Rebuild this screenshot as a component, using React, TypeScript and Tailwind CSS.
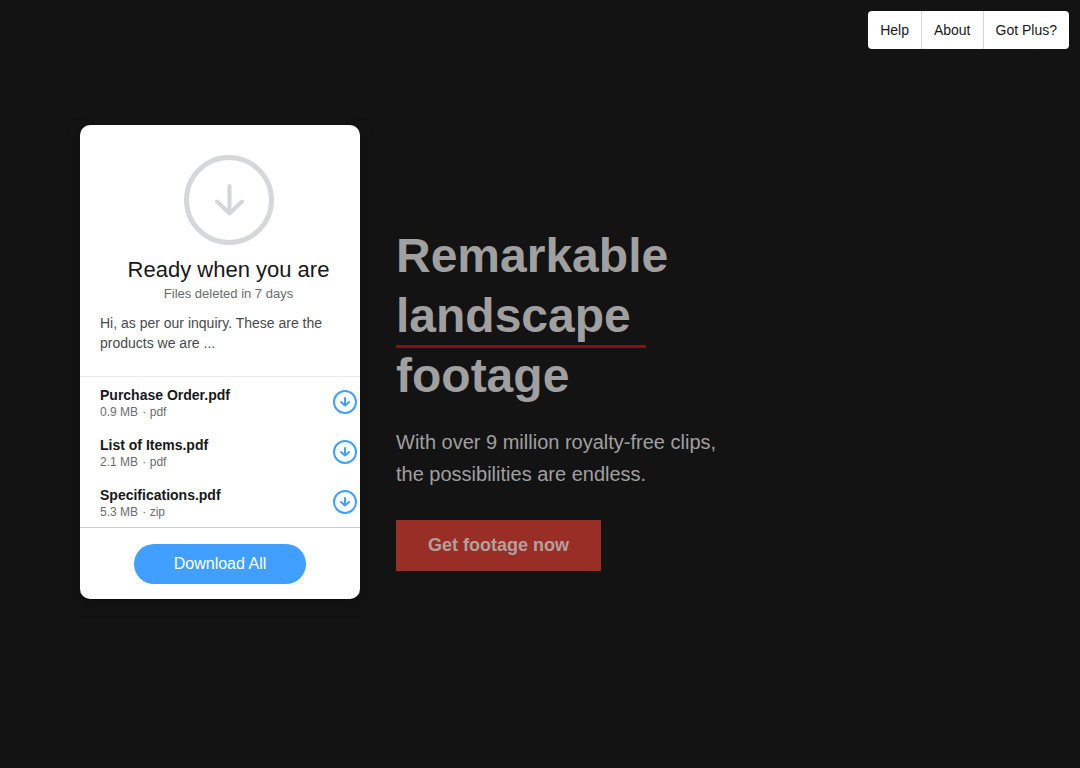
import React from 'react';

const navLinks = ["Help", "About", "Got Plus?"];

const files = [
  { name: "Purchase Order.pdf", size: "0.9 MB", type: "pdf" },
  { name: "List of Items.pdf", size: "2.1 MB", type: "pdf" },
  { name: "Specifications.pdf", size: "5.3 MB", type: "zip" }
];

const TransferCard = () => {
  return (
    <section className="w-[280px] shrink-0 overflow-hidden rounded-[10px] bg-white shadow-[0_4px_16px_rgba(0,0,0,0.25)]">
      <div className="flex flex-col items-center pt-[30px] pb-[23px] pl-5 pr-[3px]">
        <svg className="h-[90px] w-[90px]" viewBox="0 0 90 90" fill="none" aria-hidden="true">
          <circle cx="45" cy="45" r="42.5" stroke="#d6d7d8" strokeWidth="5" />
          <path d="M45.5 31V58M33 46.5L45.5 58.5L58 46.5" stroke="#d4d5db" strokeWidth="4" strokeLinecap="round" strokeLinejoin="round" />
        </svg>
        <h2 className="mt-3 text-[22px] leading-[26px] text-[#17181a]">Ready when you are</h2>
        <p className="mt-[3px] text-[13px] leading-4 text-[#6a6d70]">Files deleted in 7 days</p>
        <p className="mt-[11px] w-full text-sm leading-5 text-[#484a4d]">
          Hi, as per our inquiry. These are the products we are ...
        </p>
      </div>

      <ul className="border-y border-t-[#e8eaed] border-b-[#cccccc]">
        {files.map((file) => (
          <li key={file.name} className="flex h-[50px] items-center justify-between pl-5 pr-[3px]">
            <div className="pt-0.5">
              <h3 className="text-sm leading-[18px] font-bold text-[#17181a]">{file.name}</h3>
              <p className="text-xs leading-4 text-[#6a6d70]">
                {file.size} <span className="ml-px">·</span> {file.type}
              </p>
            </div>
            <button type="button" aria-label={`Download ${file.name}`} className="h-6 w-6">
              <svg className="h-6 w-6" viewBox="0 0 24 24" fill="none" stroke="#409fff" strokeWidth="2" aria-hidden="true">
                <circle cx="12" cy="12" r="11" />
                <path d="M12 8V15.5M8 12L12 15.5L16 12" strokeLinecap="round" strokeLinejoin="round" />
              </svg>
            </button>
          </li>
        ))}
      </ul>

      <div className="flex justify-center pt-4 pb-[15px]">
        <button type="button" className="h-10 rounded-full bg-[#409fff] px-10 text-base text-white">
          Download All
        </button>
      </div>
    </section>
  );
};

const Hero = () => {
  return (
    <section className="mt-[101px] flex max-w-[340px] flex-col items-start">
      <h1 className="text-5xl leading-[60px] font-bold text-[#a0a0a0]">
        Remarkable
        <br />
        <span className="relative inline-block">
          landscape
          <span className="absolute -bottom-0.5 left-0 h-[3px] w-[250px] bg-[#8a0f10]"></span>
        </span>
        <br />
        footage
      </h1>
      <p className="mt-5 text-xl leading-8 text-[#a0a0a0]">
        With over 9 million royalty-free clips, the possibilities are endless.
      </p>
      <a href="#footage" className="mt-[30px] bg-[#992e27] px-8 py-3 text-lg leading-[27px] font-bold text-[#b3a09c]">
        Get footage now
      </a>
    </section>
  );
};

const App = () => {
  return (
    <div className="min-h-screen bg-[#131313] font-['Liberation_Sans',Arial,sans-serif]">
      <header className="flex justify-end p-[11px]">
        <nav className="flex divide-x divide-[#d4d7d9] rounded bg-white">
          {navLinks.map((label) => (
            <a key={label} href="#" className="px-3 py-[9px] text-sm leading-5 text-[#17181a]">
              {label}
            </a>
          ))}
        </nav>
      </header>

      <main className="flex items-start gap-9 px-20 pt-[65px]">
        <TransferCard />
        <Hero />
      </main>
    </div>
  );
};

export default App;
